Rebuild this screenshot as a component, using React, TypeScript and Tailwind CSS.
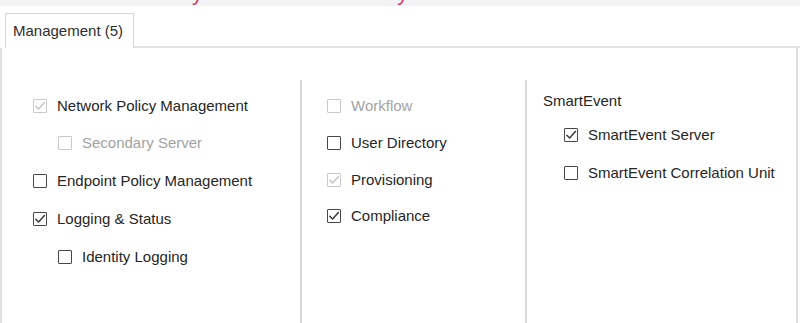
import React from "react";

type BoxProps = {
  checked?: boolean;
  disabled?: boolean;
};

function Box({ checked = false, disabled = false }: BoxProps) {
  return (
    <span
      className={
        "flex h-[14px] w-[14px] shrink-0 items-center justify-center rounded-[1px] border bg-white " +
        (disabled ? "border-[#c9c9c9]" : "border-[#474747]")
      }
    >
      {checked && (
        <svg width="12" height="12" viewBox="0 0 12 12" fill="none">
          <path
            d="M1.8 6.2 L4.6 9 L10.4 2.6"
            stroke={disabled ? "#c4c4c4" : "#383838"}
            strokeWidth="1.5"
            strokeLinecap="round"
            strokeLinejoin="round"
          />
        </svg>
      )}
    </span>
  );
}

type ItemProps = {
  label: string;
  checked?: boolean;
  disabled?: boolean;
  dimText?: boolean;
  indent?: boolean;
  className?: string;
};

function Item({ label, checked, disabled, dimText, indent, className = "" }: ItemProps) {
  return (
    <div className={"flex items-center gap-[10px] " + (indent ? "pl-[25px] " : "") + className}>
      <Box checked={checked} disabled={disabled} />
      <span className={dimText ? "text-[#a3a3a3]" : "text-[#262626]"}>{label}</span>
    </div>
  );
}

export default function App() {
  return (
    <div
      className="h-[323px] w-[800px] overflow-hidden bg-white text-[15px] leading-[18px]"
      style={{ fontFamily: '"Liberation Sans", Arial, sans-serif' }}
    >
      {/* cut-off heading above the dialog */}
      <div className="h-[6px] overflow-hidden bg-[#f3f3f6]">
        <div className="-mt-[18px] flex text-[22px] leading-[22px] text-[#cc3a6e]">
          <span className="ml-[192px]">y</span>
          <span className="ml-[180px]">.</span>
          <span className="ml-[8px]">y</span>
        </div>
      </div>

      <div className="mt-[7px] flex">
        <div className="ml-[5px] flex h-[35px] w-[129px] items-center border-x border-t border-[#d6d6d6] bg-white pl-[7px] text-[#2e2e2e]">
          Management (5)
        </div>
        <div className="flex-1 border-b-2 border-[#e2e2e2]" />
      </div>

      <div className="mr-[2px] flex h-[280px] border-x-2 border-[#e0e0e0] pt-[32px]">
        {/* column 1 */}
        <div className="flex w-[298px] flex-col pl-[31px] pt-[8px]">
          <Item className="h-[36px]" label="Network Policy Management" checked disabled />
          <Item className="h-[37px]" label="Secondary Server" disabled dimText indent />
          <Item className="h-[39px]" label="Endpoint Policy Management" />
          <Item className="h-[38px]" label="Logging & Status" checked />
          <Item className="h-[38px]" label="Identity Logging" indent />
        </div>

        {/* column 2 */}
        <div className="flex w-[225px] flex-col border-l-2 border-[#d9d9d9] pl-[25px] pt-[7px]">
          <Item className="h-[37px]" label="Workflow" disabled dimText />
          <Item className="h-[37px]" label="User Directory" />
          <Item className="h-[37px]" label="Provisioning" checked disabled />
          <Item className="h-[36px]" label="Compliance" checked />
        </div>

        {/* column 3 */}
        <div className="flex flex-1 flex-col border-l-2 border-[#d9d9d9] pl-[16px] pt-[12px]">
          <div className="text-[#262626]">SmartEvent</div>
          <Item className="mt-[6px] h-[37px] pl-[21px]" label="SmartEvent Server" checked />
          <Item className="h-[39px] pl-[21px]" label="SmartEvent Correlation Unit" />
        </div>
      </div>
    </div>
  );
}
